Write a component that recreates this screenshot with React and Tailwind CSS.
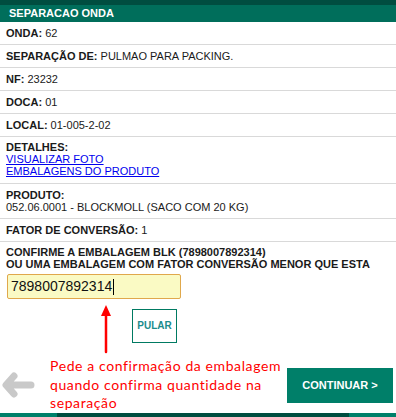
import React from 'react';

function Row({ label, value }) {
  return (
    <div className="border-b border-[#d9d9d9] px-[6px] py-[5px] text-[11px] leading-[12px] text-[#1a1a1a]">
      <span className="font-bold">{label}</span> {value}
    </div>
  );
}

function BackArrow() {
  return (
    <svg width="34" height="26" viewBox="0 0 34 26" className="shrink-0">
      <path
        d="M12 4 L4 13 L12 22 M5 13 H29"
        fill="none"
        stroke="#c9c9c9"
        strokeWidth="7"
        strokeLinecap="round"
        strokeLinejoin="round"
      />
    </svg>
  );
}

export default function App() {
  return (
    <div className="w-[396px] h-[417px] bg-white relative overflow-hidden" style={{ fontFamily: '"Liberation Sans", Arial, sans-serif' }}>
      <div className="h-[5px] bg-[#004d40]" />
      <div className="h-[17px] bg-[#006e5b] px-[9px] text-[11px] leading-[17px] font-bold text-white">
        SEPARACAO ONDA
      </div>

      <Row label="ONDA:" value="62" />
      <Row label="SEPARAÇÃO DE:" value="PULMAO PARA PACKING." />
      <Row label="NF:" value="23232" />
      <Row label="DOCA:" value="01" />
      <Row label="LOCAL:" value="01-005-2-02" />

      <div className="border-b border-[#d9d9d9] px-[6px] pt-[4px] pb-[6px] text-[11px] leading-[12px] text-[#1a1a1a]">
        <div className="font-bold">DETALHES:</div>
        <a href="#" className="block text-[#0000ee] underline">VISUALIZAR FOTO</a>
        <a href="#" className="block text-[#0000ee] underline">EMBALAGENS DO PRODUTO</a>
      </div>

      <div className="border-b border-[#d9d9d9] px-[6px] pt-[5px] pb-[5px] text-[11px] leading-[12px] text-[#1a1a1a]">
        <div className="font-bold">PRODUTO:</div>
        <div>052.06.0001 - BLOCKMOLL (SACO COM 20 KG)</div>
      </div>

      <Row label="FATOR DE CONVERSÃO:" value="1" />

      <div className="px-[6px] pt-[4px] text-[11px] leading-[12px] font-bold text-[#1a1a1a]">
        <div>CONFIRME A EMBALAGEM BLK (7898007892314)</div>
        <div>OU UMA EMBALAGEM COM FATOR CONVERSÃO MENOR QUE ESTA</div>
        <div className="mt-[4px] ml-[1px] w-[174px] h-[25px] rounded-[2px] border border-[#e0a84c] bg-[#fafac4] px-[3px] text-[14px] leading-[23px] font-normal text-[#111] flex items-center">
          <span>7898007892314</span>
          <span className="w-px h-[16px] bg-black ml-px" />
        </div>
        <div className="mt-[10px] ml-[126px] w-[45px] h-[34px] border border-[#007a62] flex items-center justify-center text-[10px] font-bold text-[#1b8c8c]">
          PULAR
        </div>
      </div>

      {/* anotação */}
      <svg width="14" height="50" viewBox="0 0 14 50" className="absolute left-[99px] top-[304px]">
        <path d="M7 1 L12 12 L2 12 Z" fill="#ff0000" />
        <path d="M7 10 L7 48" stroke="#ff0000" strokeWidth="2.5" strokeLinecap="round" />
      </svg>

      <div className="flex items-center mt-[13px] h-[58px]">
        <div className="w-[50px] pl-[2px] flex items-center">
          <BackArrow />
        </div>
        <div className="flex-1 text-[#ff0000] text-[14px] leading-[18.5px] tracking-[0.6px]" style={{ fontFamily: 'Lato, sans-serif' }}>
          Pede a confirmação da embalagem
          <br />
          quando confirma quantidade na
          <br />
          separação
        </div>
        <div className="w-[106px] h-[35px] mr-[3px] bg-[#007f69] flex items-center justify-center text-[11px] font-bold text-white">
          CONTINUAR &gt;
        </div>
      </div>

      <div className="absolute left-0 right-0 bottom-0 h-[4px] flex">
        <div className="w-[57px] bg-[#00806a]" />
        <div className="flex-1 bg-[#004d40]" />
        <div className="w-[47px] bg-[#00806a]" />
      </div>
    </div>
  );
}
